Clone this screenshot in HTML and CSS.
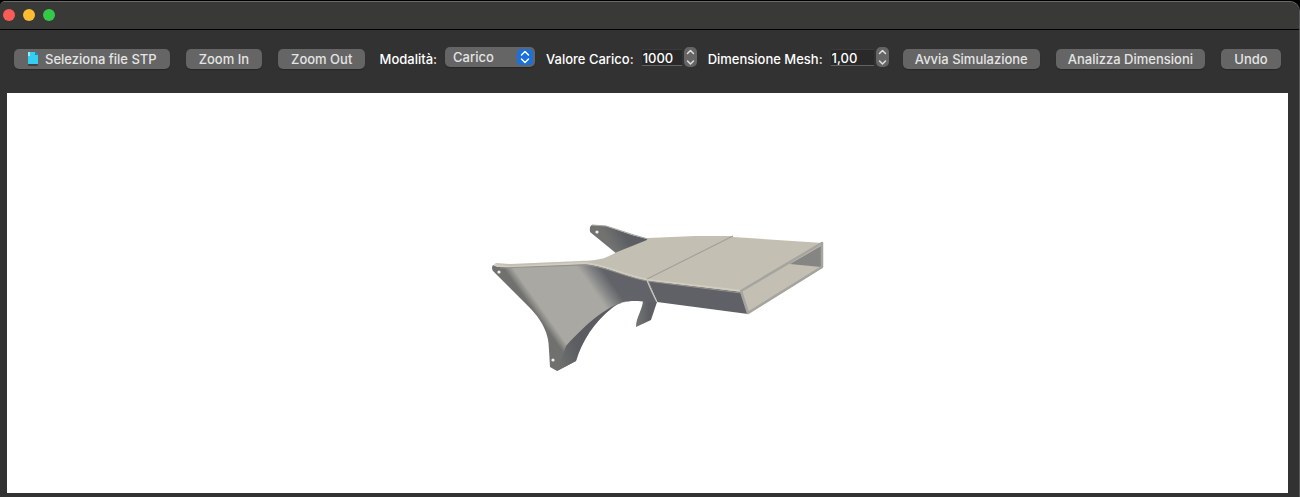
FILE: index.html
```html
<!DOCTYPE html>
<html lang="it">
<head>
<meta charset="utf-8">
<title>Simulazione STP</title>
<link rel="stylesheet" href="styles.css">
</head>
<body>
<div class="window">
  <header class="titlebar">
    <button class="light light-close" aria-label="Chiudi"></button>
    <button class="light light-min" aria-label="Riduci"></button>
    <button class="light light-max" aria-label="Ingrandisci"></button>
  </header>
  <div class="toolbar">
    <div class="group group-view">
      <button class="btn">
        <svg class="file-icon" viewBox="0 0 13 16" aria-hidden="true">
          <rect x="1" y="13" width="10" height="2" rx="1" fill="#414141"/>
          <path d="M1 1h7l3 3v9H1z" fill="#35cdf0"/>
          <path d="M1 1h2v4H1z" fill="#9be9fa"/>
          <path d="M8 1v3h3z" fill="#1689a8"/>
        </svg>
        <span>Seleziona file STP</span>
      </button>
      <button class="btn">Zoom In</button>
      <button class="btn">Zoom Out</button>
    </div>
    <div class="group group-fields">
      <div class="field">
        <label class="label" for="mode">Modalità:</label>
        <span class="select-wrap">
          <select class="select" id="mode"><option>Carico</option><option>Vincolo</option></select>
          <svg class="select-arrows" viewBox="0 0 16 16" aria-hidden="true"><path d="M4.500 6L8 2.500 11.500 6M4.500 10L8 13.500 11.500 10"/></svg>
        </span>
      </div>
      <div class="field">
        <label class="label" for="load">Valore Carico:</label>
        <span class="spin">
          <input class="number" id="load" type="text" inputmode="numeric" value="1000">
          <span class="stepper">
            <button class="step" aria-label="Aumenta carico"><svg viewBox="0 0 13 10"><path d="M3.500 6.500l3-3 3 3"/></svg></button>
            <button class="step" aria-label="Riduci carico"><svg viewBox="0 0 13 10"><path d="M3.500 4l3 3 3-3"/></svg></button>
          </span>
        </span>
      </div>
      <div class="field">
        <label class="label" for="mesh">Dimensione Mesh:</label>
        <span class="spin">
          <input class="number number-wide" id="mesh" type="text" inputmode="decimal" value="1,00">
          <span class="stepper">
            <button class="step" aria-label="Aumenta mesh"><svg viewBox="0 0 13 10"><path d="M3.500 6.500l3-3 3 3"/></svg></button>
            <button class="step" aria-label="Riduci mesh"><svg viewBox="0 0 13 10"><path d="M3.500 4l3 3 3-3"/></svg></button>
          </span>
        </span>
      </div>
    </div>
    <div class="group">
      <button class="btn">Avvia Simulazione</button>
      <button class="btn">Analizza Dimensioni</button>
      <button class="btn">Undo</button>
    </div>
  </div>
  <main class="viewport">
    <svg class="model" viewBox="7 93 1281 400" role="img" aria-label="Modello 3D">
      <defs>
        <linearGradient id="wing" gradientUnits="userSpaceOnUse" x1="505" y1="270.500" x2="570.400" y2="224.200">
          <stop offset="0" stop-color="#70716f"/>
          <stop offset=".1" stop-color="#a9a8a3"/>
          <stop offset=".76" stop-color="#a9a8a3"/>
          <stop offset=".88" stop-color="#828384"/>
          <stop offset="1" stop-color="#626368"/>
        </linearGradient>
        <linearGradient id="under" gradientUnits="userSpaceOnUse" x1="556" y1="360" x2="586" y2="350">
          <stop offset="0" stop-color="#70716f"/>
          <stop offset=".7" stop-color="#5e5f64"/>
          <stop offset="1" stop-color="#5b5c61"/>
        </linearGradient>
        <linearGradient id="back" gradientUnits="userSpaceOnUse" x1="607" y1="240" x2="622" y2="231">
          <stop offset="0" stop-color="#727371"/>
          <stop offset="1" stop-color="#5d5e64"/>
        </linearGradient>
        <linearGradient id="leg" x1="0" y1="0" x2="1" y2="0">
          <stop offset="0" stop-color="#747674"/>
          <stop offset=".6" stop-color="#5e5f64"/>
        </linearGradient>
      </defs>
      <path d="M643 300C643 309 636 317 636 327L651 320L657 302z" fill="url(#leg)"/>
      <path d="M592 225Q589 226 590 232L617 254L640 248L648 239L632 235L606 226z" fill="url(#back)"/>
      <path d="M592 225L606 226L634 235L648 239" fill="none" stroke="#aaa89f" stroke-width="1.200"/>
      <path d="M495 263L510 264L580 261C604 260 605 258 617 252L647 240L648 238L695 236L731 236L733 237L823 243L742 292L646 281L590 266L500 269z" fill="#c3bfb2"/>
      <path d="M493 265Q491 268 493 271L529 307C545 323 549 337 549 350L550 367L557 371L576 361C582 341 594 322 612 308C622 300 631 301 638 301L657 303L648 280C622 274 603 264 586 264L498 267z" fill="url(#wing)"/>
      <path d="M566 346L557 371L576 361C582 341 594 322 612 308C617 304 622 302 632 301C611 301 586 324 566 346z" fill="url(#under)"/>
      <path d="M648 280L742 292L748 314L657 302z" fill="#606167"/>
      <path d="M494 265L510 267L584 263C604 264 621 275 648 280L742 291" fill="none" stroke="#d0ccc0" stroke-width="2"/>
      <path d="M500 268L582 265C603 265 621 276 647 281L741 293" fill="none" stroke="#92918c" stroke-width="1"/>
      <path d="M741 291L822 243L822 268L748 314z" fill="#c3bfb2"/>
      <path d="M790 264L821 246V267z" fill="#858584"/>
      <path d="M741 291L822 243L822 267L748 313z" fill="none" stroke="#a5a49f" stroke-width="2.500" stroke-linejoin="round"/>
      <path d="M733 236L647 279" fill="none" stroke="#a2a19b" stroke-width="1.200"/>
      <path d="M647 279Q647 282 657 302" fill="none" stroke="#c9c6bc" stroke-width="1.300"/>
      <circle cx="597" cy="232" r="1.600" fill="#f1efe8"/>
      <circle cx="499" cy="272" r="1.600" fill="#f1efe8"/>
      <circle cx="553" cy="360" r="1.600" fill="#f1efe8"/>
    </svg>
  </main>
</div>
</body>
</html>
```
FILE: styles.css
```css
* { box-sizing: border-box; }
body {
  margin: 0;
  background: #000;
  font-family: Inter, "Liberation Sans", sans-serif;
  font-size: 13px;
  font-weight: 500;
  color: #f2f2f2;
}
button, input, select { font: inherit; color: inherit; margin: 0; border: 0; }
.window {
  display: flex;
  flex-direction: column;
  min-height: calc(100vh - 1px);
  margin-top: 1px;
  background: #323232;
  border-top: 1px solid #6b6b6a;
  border-right: 1px solid #5a5a5a;
  border-radius: 5px 10px 0 0;
  overflow: hidden;
}
.titlebar {
  display: flex;
  align-items: center;
  gap: 8px;
  height: 28px;
  padding: 0 3px 1px;
  background: #393937;
  border-bottom: 1px solid #000;
}
.light { width: 12px; height: 12px; padding: 0; border-radius: 50%; }
.light-close { background: #fc5b57; }
.light-min { background: #fdbc32; }
.light-max { background: #34c948; }
.toolbar {
  display: flex;
  align-items: flex-start;
  justify-content: space-between;
  padding: 17px 18px 24px 14px;
  white-space: nowrap;
}
.group { display: flex; gap: 16px; }
.group-fields { gap: 11px; }
.btn {
  display: flex;
  align-items: center;
  justify-content: center;
  gap: 5px;
  height: 20px;
  min-width: 60px;
  margin-top: 2px;
  padding: 0 12px;
  border-radius: 5px;
  background: #656565;
  color: #e4e4e4;
  box-shadow: 0 1px 1px #262626;
}
.group-view .btn { padding: 0 13px; }
.file-icon { width: 13px; height: 16px; }
.field { display: flex; gap: 8px; }
.label { line-height: 20px; margin-top: 2px; color: #fff; }
.select-wrap { position: relative; display: flex; }
.select {
  appearance: none;
  width: 90px;
  height: 20px;
  padding: 0 24px 0 8px;
  border-radius: 5px;
  background: #656565;
  color: #e4e4e4;
  box-shadow: 0 1px 1px #262626;
}
.select-arrows {
  position: absolute;
  top: 2px;
  right: 2px;
  width: 16px;
  height: 16px;
  border-radius: 4px;
  background: #1a70dc;
  pointer-events: none;
}
.select-arrows path, .step path {
  fill: none;
  stroke: #fff;
  stroke-width: 1.5;
  stroke-linecap: round;
  stroke-linejoin: round;
}
.step path { stroke: #dedede; }
.spin { display: flex; gap: 2px; }
.number {
  width: 40px;
  height: 17px;
  margin-top: 2px;
  padding: 0 1px;
  background: #292929;
  border-top: 1px solid #3b3b3b;
  border-bottom: 1px solid #626262;
  color: #fff;
}
.number-wide { width: 43px; }
.stepper {
  display: flex;
  flex-direction: column;
  width: 13px;
  height: 20px;
  border-radius: 5px;
  overflow: hidden;
  background: #656565;
}
.step { display: flex; width: 13px; height: 10px; padding: 0; background: none; }
.step svg { width: 13px; height: 10px; }
.viewport {
  flex: 1;
  display: flex;
  margin: 0 11px 4px 7px;
  background: #fff;
}
.model { width: 100%; min-height: 240px; }
```
